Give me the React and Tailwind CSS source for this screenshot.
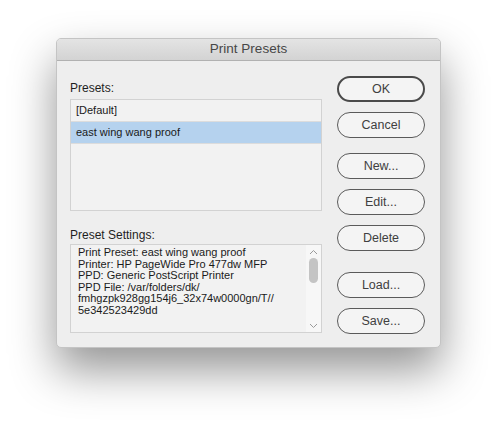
const font = { fontFamily: '"Liberation Sans", Arial, sans-serif' };

function MacButton({ label, primary, className = '' }) {
  return (
    <button
      className={`h-[26px] w-full rounded-full bg-[#f4f4f4] text-[12.5px] text-[#404040] ${
        primary ? 'border-2 border-[#4a4a4a]' : 'border border-[#5a5a5a]'
      } ${className}`}
    >
      {label}
    </button>
  );
}

const settings = [
  'Print Preset: east wing wang proof',
  'Printer: HP PageWide Pro 477dw MFP',
  'PPD: Generic PostScript Printer',
  'PPD File: /var/folders/dk/',
  'fmhgzpk928gg154j6_32x74w0000gn/T//',
  '5e342523429dd',
];

export default function App() {
  return (
    <div className="w-[497px] h-[422px] bg-white overflow-hidden pt-[38px] pl-[56px]" style={font}>
      <div className="w-[385px] h-[310px] rounded-[5px] border border-[#c4c4c4] bg-[#eeeeee] overflow-hidden shadow-[0_22px_45px_rgba(0,0,0,0.42)] flex flex-col">
        {/* title bar */}
        <div className="h-[22px] shrink-0 bg-gradient-to-b from-[#e4e4e4] to-[#d3d3d3] border-b border-[#b1b1b1] flex items-center justify-center text-[13.5px] text-[#474747]">
          Print Presets
        </div>

        <div className="flex flex-1 pt-[15px] pl-[13px] pr-[15px] gap-[15px]">
          {/* left column */}
          <div className="w-[252px] flex flex-col">
            <div className="mt-[4px] h-[19px] text-[12px] text-[#1e1e1e] leading-[16px]">Presets:</div>
            <div className="h-[112px] border border-[#d2d2d2] bg-[#f2f2f2] text-[11px] text-[#1a1a1a]">
              <div className="h-[22px] border-b border-[#dcdcdc] flex items-center pl-[5px]">[Default]</div>
              <div className="h-[22px] border-b border-[#dcdcdc] bg-[#b5d2ee] flex items-center pl-[5px]">
                east wing wang proof
              </div>
            </div>
            <div className="mt-[16px] h-[17px] text-[12px] text-[#1e1e1e] leading-[16px]">Preset Settings:</div>
            <div className="h-[89px] border border-[#d2d2d2] bg-[#f2f2f2] flex">
              <div className="flex-1 pl-[7px] pt-[2px] text-[11px] leading-[11.5px] text-[#1a1a1a]">
                {settings.map((line) => (
                  <div key={line} className="whitespace-nowrap">{line}</div>
                ))}
              </div>
              <div className="w-[15px] bg-[#f7f7f7] flex flex-col items-center pt-[4px]">
                <svg width="9" height="6" viewBox="0 0 9 6">
                  <path d="M1 5 L4.5 1.5 L8 5" fill="none" stroke="#9a9a9a" strokeWidth="1" />
                </svg>
                <div className="mt-[3px] w-[9px] h-[25px] rounded-full bg-[#c4c4c4]" />
                <div className="flex-1" />
                <svg width="9" height="6" viewBox="0 0 9 6" className="mb-[3px]">
                  <path d="M1 1 L4.5 4.5 L8 1" fill="none" stroke="#9a9a9a" strokeWidth="1" />
                </svg>
              </div>
            </div>
          </div>

          {/* right column */}
          <div className="w-[88px] flex flex-col">
            <MacButton label="OK" primary />
            <MacButton label="Cancel" className="mt-[10px]" />
            <MacButton label="New..." className="mt-[15px]" />
            <MacButton label="Edit..." className="mt-[10px]" />
            <MacButton label="Delete" className="mt-[10px]" />
            <MacButton label="Load..." className="mt-[21px]" />
            <MacButton label="Save..." className="mt-[10px]" />
          </div>
        </div>
      </div>
    </div>
  );
}
